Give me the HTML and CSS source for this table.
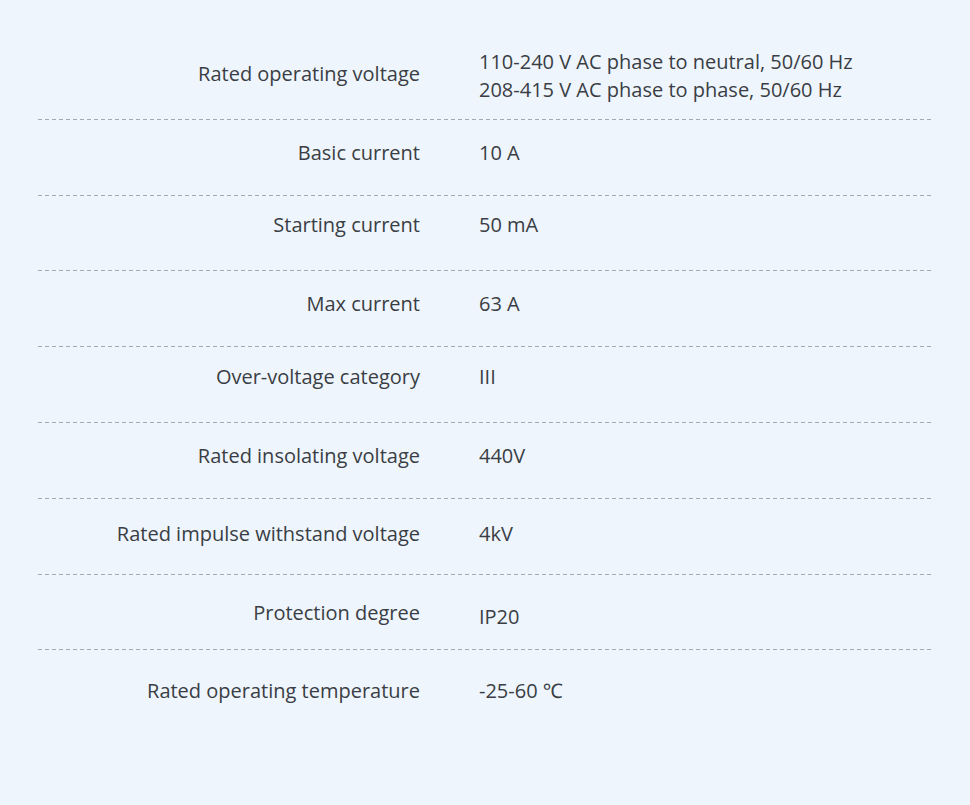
FILE: index.html
```html
<!DOCTYPE html>
<html lang="en">
<head>
<meta charset="utf-8">
<title>Specifications</title>
<link rel="stylesheet" href="styles.css">
</head>
<body>
<div class="specs">
  <div class="row r1">
    <div class="label">Rated operating voltage</div>
    <div class="value">110-240 V AC phase to neutral, 50/60 Hz<br>208-415 V AC phase to phase, 50/60 Hz</div>
  </div>
  <div class="rule"></div>
  <div class="row r2">
    <div class="label">Basic current</div>
    <div class="value">10 A</div>
  </div>
  <div class="rule"></div>
  <div class="row r3">
    <div class="label">Starting current</div>
    <div class="value">50 mA</div>
  </div>
  <div class="rule"></div>
  <div class="row r4">
    <div class="label">Max current</div>
    <div class="value">63 A</div>
  </div>
  <div class="rule"></div>
  <div class="row r5">
    <div class="label">Over-voltage category</div>
    <div class="value">III</div>
  </div>
  <div class="rule"></div>
  <div class="row r6">
    <div class="label">Rated insolating voltage</div>
    <div class="value">440V</div>
  </div>
  <div class="rule"></div>
  <div class="row r7">
    <div class="label">Rated impulse withstand voltage</div>
    <div class="value">4kV</div>
  </div>
  <div class="rule"></div>
  <div class="row r8">
    <div class="label">Protection degree</div>
    <div class="value">IP20</div>
  </div>
  <div class="rule"></div>
  <div class="row r9">
    <div class="label">Rated operating temperature</div>
    <div class="value">-25-60 ℃</div>
  </div>
</div>
</body>
</html>
```

FILE: styles.css
```css
html, body {
  margin: 0;
  padding: 0;
}
body {
  background: #eef5fd;
  width: 970px;
  height: 805px;
  overflow: hidden;
  font-family: "Open Sans", "Noto Sans", "Liberation Sans", sans-serif;
  font-size: 20px;
  line-height: 28px;
  color: #3a3e44;
}
.specs {
  padding-left: 38px;
  width: 893px;
}
.row {
  display: grid;
  grid-template-columns: 382px 1fr;
  column-gap: 59px;
  box-sizing: border-box;
  align-items: start;
}
.label {
  text-align: right;
  white-space: nowrap;
}
.value {
  white-space: nowrap;
}
.rule {
  height: 1px;
  background-image: repeating-linear-gradient(90deg, #a3a9b1 0 4px, transparent 4px 7px);
}
.r1 { height: 119px; padding-top: 48px; }
.r1 .label { padding-top: 12px; }
.r2 { height: 75px; padding-top: 19px; }
.r3 { height: 74px; padding-top: 15px; }
.r4 { height: 75px; padding-top: 19px; }
.r5 { height: 75px; padding-top: 16px; }
.r6 { height: 75px; padding-top: 19px; }
.r7 { height: 75px; padding-top: 21px; }
.r8 { height: 74px; padding-top: 24px; }
.r8 .value { padding-top: 4px; }
.r9 { height: 80px; padding-top: 27px; }
```
